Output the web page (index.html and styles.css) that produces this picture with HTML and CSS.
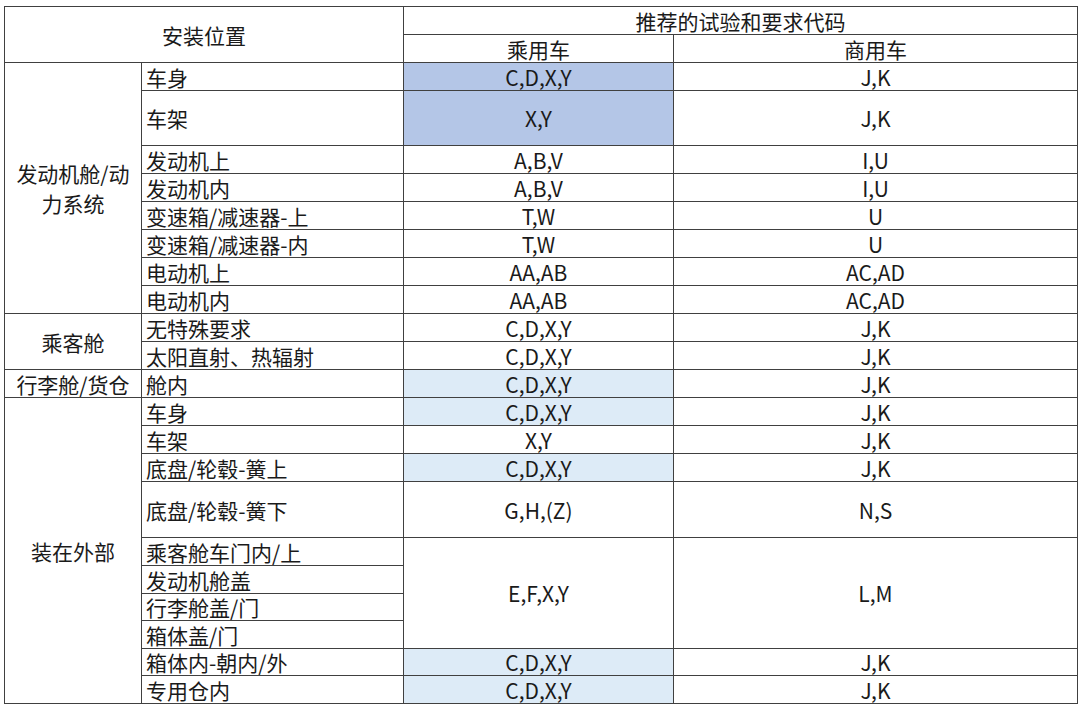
FILE: index.html
```html
<!DOCTYPE html>
<html lang="zh">
<head>
<meta charset="utf-8">
<title>推荐的试验和要求代码</title>
<link rel="stylesheet" href="styles.css">
</head>
<body>
<div class="sheet">
  <div class="cell head span-c2 span-r2">安装位置</div>
  <div class="cell head span-c2">推荐的试验和要求代码</div>
  <div class="cell head">乘用车</div>
  <div class="cell head">商用车</div>

  <div class="cell grp span-r8">发动机舱/动力系统</div>
  <div class="cell item">车身</div><div class="cell dark">C,D,X,Y</div><div class="cell">J,K</div>
  <div class="cell item">车架</div><div class="cell dark">X,Y</div><div class="cell">J,K</div>
  <div class="cell item">发动机上</div><div class="cell">A,B,V</div><div class="cell">I,U</div>
  <div class="cell item">发动机内</div><div class="cell">A,B,V</div><div class="cell">I,U</div>
  <div class="cell item">变速箱/减速器-上</div><div class="cell">T,W</div><div class="cell">U</div>
  <div class="cell item">变速箱/减速器-内</div><div class="cell">T,W</div><div class="cell">U</div>
  <div class="cell item">电动机上</div><div class="cell">AA,AB</div><div class="cell">AC,AD</div>
  <div class="cell item">电动机内</div><div class="cell">AA,AB</div><div class="cell">AC,AD</div>

  <div class="cell grp span-r2">乘客舱</div>
  <div class="cell item">无特殊要求</div><div class="cell">C,D,X,Y</div><div class="cell">J,K</div>
  <div class="cell item">太阳直射、热辐射</div><div class="cell">C,D,X,Y</div><div class="cell">J,K</div>

  <div class="cell grp">行李舱/货仓</div>
  <div class="cell item">舱内</div><div class="cell light">C,D,X,Y</div><div class="cell">J,K</div>

  <div class="cell grp span-r10">装在外部</div>
  <div class="cell item">车身</div><div class="cell light">C,D,X,Y</div><div class="cell">J,K</div>
  <div class="cell item">车架</div><div class="cell">X,Y</div><div class="cell">J,K</div>
  <div class="cell item">底盘/轮毂-簧上</div><div class="cell light">C,D,X,Y</div><div class="cell">J,K</div>
  <div class="cell item">底盘/轮毂-簧下</div><div class="cell">G,H,(Z)</div><div class="cell">N,S</div>
  <div class="cell item">乘客舱车门内/上</div><div class="cell span-r4">E,F,X,Y</div><div class="cell span-r4">L,M</div>
  <div class="cell item">发动机舱盖</div>
  <div class="cell item">行李舱盖/门</div>
  <div class="cell item">箱体盖/门</div>
  <div class="cell item">箱体内-朝内/外</div><div class="cell light">C,D,X,Y</div><div class="cell">J,K</div>
  <div class="cell item">专用仓内</div><div class="cell light">C,D,X,Y</div><div class="cell">J,K</div>
</div>
</body>
</html>
```

FILE: styles.css
```css
html, body {
  margin: 0;
  padding: 0;
  background: #ffffff;
}

body {
  padding: 6px 0 0 4px;
  font-family: "Noto Sans CJK SC", "Noto Sans", sans-serif;
  color: #1a1a1a;
}

.sheet {
  display: grid;
  width: max-content;
  grid-template-columns: 136px 261px 269px 403px;
  grid-template-rows:
    27px 27px
    27px 54px 27px 27px 27px 27px 27px 27px
    27px 27px
    27px
    27px 27px 27px 55px 27px 27px 26px 27px 26px 27px;
  gap: 1px;
  padding: 1px;
  background: #404040;
  font-size: 21px;
  line-height: 22px;
}

.cell {
  background: #ffffff;
  display: flex;
  align-items: center;
  justify-content: center;
  text-align: center;
  white-space: nowrap;
  min-width: 0;
  min-height: 0;
}

.head { font-weight: normal; }

.item {
  justify-content: flex-start;
  padding-left: 4px;
}

.grp {
  white-space: normal;
  padding: 0 4px;
  line-height: 30px;
}

.span-c2 { grid-column: span 2; }
.span-r2 { grid-row: span 2; }
.span-r4 { grid-row: span 4; }
.span-r8 { grid-row: span 8; }
.span-r10 { grid-row: span 10; }

.dark { background: #b4c6e7; }
.light { background: #ddebf7; }
```
